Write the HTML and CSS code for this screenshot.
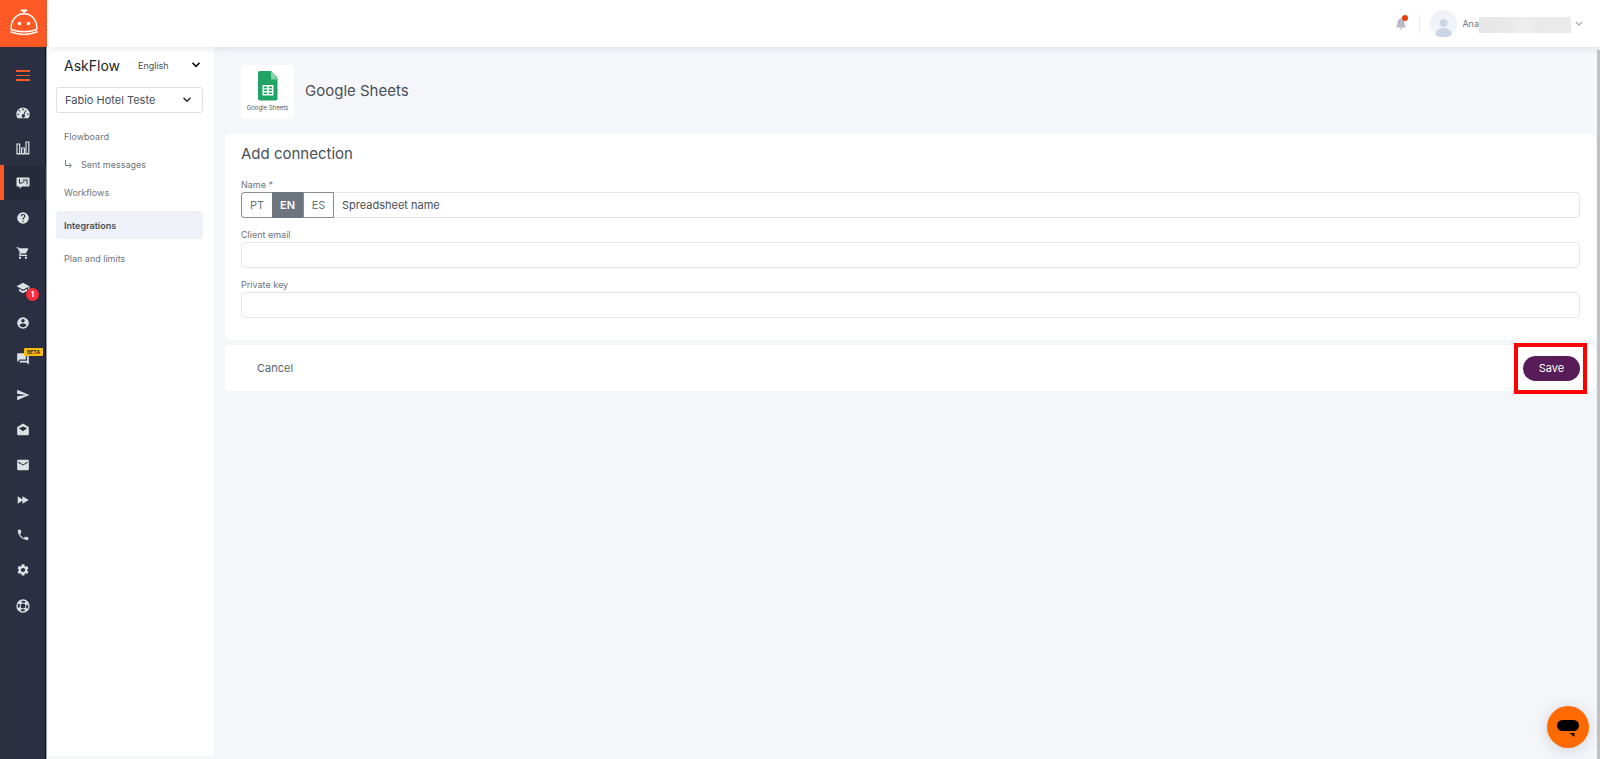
FILE: index.html
```html
<!DOCTYPE html>
<html lang="en">
<head>
    <meta charset="UTF-8">
    <meta name="viewport" content="width=device-width, initial-scale=1.0">
    <title>AskFlow - Google Sheets</title>
    <link rel="stylesheet" href="styles.css">
</head>
<body>
    <nav class="rail" aria-label="Main">
        <a class="brand" href="#" aria-label="Home">
            <svg width="30" height="27" viewBox="0 0 30 27" fill="none" stroke="#fff" stroke-width="1.4" stroke-linecap="round">
                <path d="M12.500 1.500h5M15 1.500v3" stroke-width="1.800"/>
                <path d="M2.200 20.500C1.600 11.500 7 4.700 15 4.700s13.400 6.800 12.800 15.800C20 23.200 10 23.200 2.200 20.500z"/>
                <path d="M2 23c8 3 18 3 26 0"/>
                <circle cx="10.500" cy="14.500" r="1.700" fill="#fff" stroke="none"/>
                <circle cx="19.500" cy="14.500" r="1.700" fill="#fff" stroke="none"/>
            </svg>
        </a>
        <button class="rail-toggle" type="button" aria-label="Toggle menu">
            <svg width="14" height="12" viewBox="0 0 14 12" fill="#ff5a25"><path d="M0 0h14v2H0zM0 5h14v1H0zM0 9h14v2H0z"/></svg>
        </button>
        <a class="rail-item" href="#" aria-label="Dashboard">
            <svg width="14" height="12" viewBox="0 0 14 12"><path fill-rule="evenodd" d="M7 .5A6.700 6.700 0 0 0 .3 7.200c0 1.500.4 2.800 1.200 4h11c.8-1.200 1.200-2.500 1.200-4A6.700 6.700 0 0 0 7 .5zM7 1.600a.8.8 0 1 1 0 1.600.8.8 0 0 1 0-1.600zM3.500 3a.8.8 0 1 1 0 1.600.8.8 0 0 1 0-1.600zM2.200 6.500a.8.8 0 1 1 0 1.600.8.8 0 0 1 0-1.600zM11.800 6.500a.8.8 0 1 1 0 1.600.8.8 0 0 1 0-1.600zM9.600 3l.8.400-2 4.200a1.600 1.600 0 1 1-1-.3z"/></svg>
        </a>
        <a class="rail-item" href="#" aria-label="Reports">
            <svg width="14" height="14" viewBox="0 0 14 14" fill="none" stroke="#dce1e4" stroke-width="1.200"><path d="M1 3h2.700v9.500H1zM5.600 7h2.800v5.500H5.600zM10 1h2.800v11.500H10zM.4 13h13"/></svg>
        </a>
        <a class="rail-item active" href="#" aria-label="AskFlow">
            <svg width="14" height="12" viewBox="0 0 14 12"><path fill-rule="evenodd" d="M1.500.5h11c.6 0 1 .4 1 1v7c0 .6-.4 1-1 1H6L3.500 11.800V9.500h-2c-.6 0-1-.4-1-1v-7c0-.6.4-1 1-1zM3 2v4.500h3.500V5.500H4V2zM6.800 2.500v1h3.700V7.500h1v-5z"/><path d="M6.500 4.500h2v1h-2z" fill="#262a3a"/></svg>
        </a>
        <a class="rail-item" href="#" aria-label="Help">
            <svg width="14" height="14" viewBox="0 0 24 24"><path d="M12 2a10 10 0 1 0 0 20 10 10 0 0 0 0-20zm1 17h-2v-2h2v2zm2.070-7.750-.9.920C13.450 12.900 13 13.500 13 15h-2v-.5c0-1.100.45-2.100 1.170-2.830l1.240-1.260c.37-.36.590-.86.590-1.410a2 2 0 1 0-4 0H8a4 4 0 1 1 8 0c0 .88-.36 1.680-.93 2.250z"/></svg>
        </a>
        <a class="rail-item" href="#" aria-label="Shop">
            <svg width="14" height="14" viewBox="0 0 24 24"><path d="M7 18a2 2 0 1 0 0 4 2 2 0 0 0 0-4zM1 2v2h2l3.600 7.590-1.350 2.450C4.520 15.370 5.480 17 7 17h12v-2H7.420a.25.25 0 0 1-.25-.25l.03-.12.900-1.630h7.450c.75 0 1.410-.41 1.750-1.030l3.580-6.490A1 1 0 0 0 20 4H5.210l-.94-2H1zm16 16a2 2 0 1 0 0 4 2 2 0 0 0 0-4z"/></svg>
        </a>
        <a class="rail-item" href="#" aria-label="Academy">
            <svg width="14" height="14" viewBox="0 0 24 24"><path d="M5 13.180v4L12 21l7-3.820v-4L12 17l-7-3.820zM12 3 1 9l11 6 9-4.910V17h2V9L12 3z"/></svg>
            <span class="count-badge">1</span>
        </a>
        <a class="rail-item" href="#" aria-label="Profile">
            <svg width="14" height="14" viewBox="0 0 24 24"><path d="M12 2a10 10 0 1 0 0 20 10 10 0 0 0 0-20zm0 3a3 3 0 1 1 0 6 3 3 0 0 1 0-6zm0 14.200a7.200 7.200 0 0 1-6-3.220c.03-1.990 4-3.080 6-3.080s5.970 1.090 6 3.080a7.200 7.200 0 0 1-6 3.220z"/></svg>
        </a>
        <a class="rail-item tall" href="#" aria-label="Chat">
            <svg width="14" height="14" viewBox="0 0 24 24"><path d="M21 6h-2v9H6v2c0 .55.450 1 1 1h11l4 4V7c0-.55-.45-1-1-1zm-4 6V3c0-.55-.45-1-1-1H3c-.55 0-1 .450-1 1v14l4-4h10c.55 0 1-.45 1-1z"/></svg>
            <span class="beta-badge">BETA</span>
        </a>
        <a class="rail-item" href="#" aria-label="Campaigns">
            <svg width="14" height="14" viewBox="0 0 24 24"><path d="M2 21 23 12 2 3v7l15 2-15 2z"/></svg>
        </a>
        <a class="rail-item" href="#" aria-label="Newsletters">
            <svg width="14" height="14" viewBox="0 0 24 24"><path fill-rule="evenodd" d="M12 1 3 6.300C2.400 6.700 2 7.300 2 8v11c0 1.100.9 2 2 2h16a2 2 0 0 0 2-2V8c0-.7-.4-1.300-1-1.700zM12 6l7 3.200L12 14 5 9.200z"/></svg>
        </a>
        <a class="rail-item" href="#" aria-label="Email">
            <svg width="14" height="14" viewBox="0 0 24 24"><path d="M20 3H4a2 2 0 0 0-2 2v14c0 1.100.9 2 2 2h16a2 2 0 0 0 2-2V5a2 2 0 0 0-2-2zm0 5-8 5-8-5V6l8 5 8-5v2z"/></svg>
        </a>
        <a class="rail-item" href="#" aria-label="Automations">
            <svg width="14" height="14" viewBox="0 0 24 24"><path d="M3 18.500 11 13v5.500L22 12 11 5.500V11L3 5.500z"/></svg>
        </a>
        <a class="rail-item" href="#" aria-label="Calls">
            <svg width="14" height="14" viewBox="0 0 24 24"><path d="M6.620 10.790a15.150 15.150 0 0 0 6.590 6.590l2.200-2.200a1 1 0 0 1 1.020-.24c1.120.37 2.330.570 3.570.570.55 0 1 .450 1 1V20c0 .55-.45 1-1 1A17 17 0 0 1 3 4c0-.55.450-1 1-1h3.500c.55 0 1 .450 1 1 0 1.250.2 2.450.57 3.570a1 1 0 0 1-.25 1.020z"/></svg>
        </a>
        <a class="rail-item" href="#" aria-label="Settings">
            <svg width="14" height="14" viewBox="0 0 24 24"><path d="M19.140 12.940c.04-.3.060-.61.060-.94s-.02-.64-.07-.94l2.030-1.580a.49.49 0 0 0 .12-.61l-1.920-3.320a.49.49 0 0 0-.59-.22l-2.390.960a7 7 0 0 0-1.620-.94l-.36-2.540A.48.480 0 0 0 13.920 2h-3.840a.48.480 0 0 0-.47.410l-.36 2.540c-.59.240-1.130.57-1.620.940l-2.390-.96a.48.480 0 0 0-.59.220L2.740 8.870a.48.480 0 0 0 .12.610l2.030 1.580a6 6 0 0 0 0 1.880l-2.030 1.580a.49.490 0 0 0-.12.610l1.920 3.320c.12.220.370.29.590.22l2.390-.96c.5.380 1.030.700 1.620.940l.36 2.540c.05.240.24.410.48.410h3.840c.24 0 .44-.17.470-.41l.36-2.540a7 7 0 0 0 1.620-.94l2.390.960c.22.080.47 0 .59-.22l1.920-3.320a.48.480 0 0 0-.12-.61zM12 15.600a3.600 3.600 0 1 1 0-7.200 3.600 3.600 0 0 1 0 7.200z"/></svg>
        </a>
        <a class="rail-item tall" href="#" aria-label="Support">
            <svg width="14" height="14" viewBox="0 0 14 14" fill="none" stroke="#dce1e4"><circle cx="7" cy="7" r="6" stroke-width="1.300"/><circle cx="7" cy="7" r="4.400" stroke-width="3" stroke-dasharray="3.450 3.450" stroke-dashoffset="1.700" transform="rotate(45 7 7)"/><circle cx="7" cy="7" r="3" stroke-width="1"/></svg>
        </a>
    </nav>

    <div class="page">
        <header class="topbar">
            <button class="bell" type="button" aria-label="Notifications">
                <svg width="10" height="12" viewBox="0 0 10 12" fill="#b8b8c8"><path d="M5 0c.5 0 .8.300.8.800C7.600 1.200 8.500 2.600 8.500 4.500c0 2.500.5 3.500 1.300 4.200V9.500H.2v-.8C1 8 1.500 7 1.500 4.500c0-1.900.9-3.300 2.700-3.700C4.200.3 4.500 0 5 0zM3.600 10.200h2.800a1.400 1.400 0 0 1-2.800 0z"/></svg>
                <span class="bell-dot"></span>
            </button>
            <span class="divider"></span>
            <button class="user" type="button">
                <svg class="avatar" width="27" height="27" viewBox="0 0 27 27"><circle cx="13.500" cy="13.500" r="13.500" fill="#f0f4f8"/><circle cx="13.500" cy="13" r="4" fill="#cbd5e3"/><path d="M5.500 25c0-4.500 3.500-7 8-7s8 2.500 8 7a13.500 13.500 0 0 1-16 0z" fill="#cbd5e3"/></svg>
                <span>Ana</span>
                <span class="user-mask"></span>
                <svg width="8" height="6" viewBox="0 0 8 6" fill="none" stroke="#a9adbb" stroke-width="1.300"><path d="M1 1l3 3 3-3"/></svg>
            </button>
        </header>

        <div class="content">
            <aside class="side">
                <div class="side-head">
                    <span class="side-title">AskFlow</span>
                    <div class="select-box language">
                        <select aria-label="Language"><option>English</option></select>
                        <svg width="8" height="6" viewBox="0 0 8 6" fill="none" stroke="#111" stroke-width="1.600"><path d="M.5.8 4 4.300 7.500.8"/></svg>
                    </div>
                </div>
                <div class="select-box hotel">
                    <select aria-label="Hotel"><option>Fabio Hotel Teste</option></select>
                    <svg width="8" height="6" viewBox="0 0 8 6" fill="none" stroke="#222" stroke-width="1.400"><path d="M.5.8 4 4.300 7.500.8"/></svg>
                </div>
                <nav class="side-nav" aria-label="AskFlow">
                    <a href="#">Flowboard</a>
                    <a href="#">
                        <svg width="9" height="9" viewBox="0 0 9 9" fill="none" stroke="#74808c"><path d="M1.500 0v5.500h5.500M5.200 3.300l2.200 2.200-2.200 2.200"/></svg>
                        Sent messages
                    </a>
                    <a href="#">Workflows</a>
                    <a class="selected" href="#">Integrations</a>
                    <a href="#">Plan and limits</a>
                </nav>
            </aside>

            <main class="main">
                <div class="app-head">
                    <div class="app-logo">
                        <svg width="20" height="30" viewBox="0 0 20 30"><path d="M2 0h11l6.500 7v20.500a2 2 0 0 1-2 2H2a2 2 0 0 1-2-2V2a2 2 0 0 1 2-2z" fill="#1fa463"/><path d="M13 0l6.500 8.500H14.500A1.500 1.500 0 0 1 13 7z" fill="#8ed1b1"/><path fill-rule="evenodd" d="M4.500 14h11v10.500h-11zM6 15.500v1.700h3.200v-1.700zm4.700 0v1.700H14v-1.700zM6 18.500v1.600h3.200v-1.600zm4.700 0v1.600H14v-1.600zM6 21.400v1.700h3.200v-1.700zm4.700 0v1.700H14v-1.700z" fill="#fff"/></svg>
                        <span>Google Sheets</span>
                    </div>
                    <h1>Google Sheets</h1>
                </div>

                <form class="connection">
                    <section class="card fields">
                        <h2>Add connection</h2>
                        <div class="form-group">
                            <label for="name">Name *</label>
                            <div class="input-group">
                                <button class="lang-btn" type="button">PT</button>
                                <button class="lang-btn selected" type="button">EN</button>
                                <button class="lang-btn" type="button">ES</button>
                                <input type="text" id="name" value="Spreadsheet name">
                            </div>
                        </div>
                        <div class="form-group">
                            <label for="email">Client email</label>
                            <input type="text" id="email">
                        </div>
                        <div class="form-group">
                            <label for="key">Private key</label>
                            <input type="text" id="key">
                        </div>
                    </section>
                    <div class="card actions">
                        <button class="cancel-btn" type="button">Cancel</button>
                        <div class="save-box">
                            <button class="save-btn" type="button">Save</button>
                        </div>
                    </div>
                </form>
            </main>
            <div class="scrollbar"></div>
        </div>
    </div>

    <button class="chat-launcher" type="button" aria-label="Open chat">
        <svg width="22" height="18" viewBox="0 0 22 18"><rect x="0" y="0" width="22" height="11" rx="5.500"/><path d="M12.500 13h5v4z"/></svg>
    </button>
</body>
</html>
```
FILE: styles.css
```css
* {
    box-sizing: border-box;
}
body {
    display: flex;
    min-height: 100vh;
    margin: 0;
    font-family: Inter, "Liberation Sans", sans-serif;
    font-size: 11px;
    color: #495057;
    background-color: #f4f6fa;
}
a {
    color: inherit;
    text-decoration: none;
}
button, input, select {
    font: inherit;
    color: inherit;
}
button {
    padding: 0;
    border: none;
    background: none;
    cursor: pointer;
}
svg {
    display: block;
    flex: none;
}

/* icon rail */
.rail {
    flex: none;
    width: 47px;
    background-color: #2b2f42;
    border-right: 1px solid #9a9ca8;
    box-shadow: inset -1px 0 #101428;
}
.brand {
    display: flex;
    align-items: center;
    justify-content: center;
    height: 47px;
    margin-right: -1px;
    padding-bottom: 3px;
    background-color: #ff5a25;
}
.rail-toggle {
    display: flex;
    align-items: center;
    justify-content: center;
    width: 100%;
    height: 38px;
    margin: 10px 0 0;
    padding-bottom: 1px;
}
.rail-item {
    position: relative;
    display: flex;
    align-items: center;
    justify-content: center;
    height: 35px;
    fill: #dce1e4;
}
.rail-item.tall {
    height: 37px;
}
.rail-item.active {
    background-color: #262a3a;
    box-shadow: inset 4px 0 #ff5a25;
}
.count-badge {
    position: absolute;
    top: 18px;
    left: 26px;
    width: 13px;
    height: 13px;
    border-radius: 50%;
    background-color: #f92d36;
    color: #fff;
    font-size: 8px;
    font-weight: 700;
    line-height: 13px;
    text-align: center;
}
.beta-badge {
    position: absolute;
    top: 8px;
    left: 24px;
    width: 19px;
    border-radius: 1px;
    background-color: #f8b90c;
    color: #2b2f42;
    font-size: 5px;
    font-weight: 700;
    line-height: 8px;
    text-align: center;
}

/* top bar */
.page {
    display: flex;
    flex: 1;
    flex-direction: column;
    min-width: 0;
}
.topbar {
    position: relative;
    display: flex;
    align-items: center;
    justify-content: flex-end;
    height: 47px;
    padding-right: 17px;
    background-color: #fff;
    box-shadow: 0 1px 8px rgba(40, 45, 70, 0.13);
}
.bell {
    position: relative;
}
.bell-dot {
    position: absolute;
    top: -3px;
    right: -2px;
    width: 6px;
    height: 6px;
    border-radius: 50%;
    background-color: #e63c0c;
}
.divider {
    width: 1px;
    height: 18px;
    margin: 0 10px 0 13px;
    background-color: #e6e8ee;
}
.user {
    display: flex;
    align-items: center;
    font-size: 9px;
    color: #6c757d;
}
.avatar {
    margin-right: 5px;
}
.user-mask {
    width: 92px;
    height: 16px;
    margin: 2px 4px 0 0;
    background: linear-gradient(90deg, #e6e6e6, #e9e9e9 30%, #efefef 50%, #e9e9e9 65%, #ebebeb);
}

/* side panel */
.content {
    display: flex;
    flex: 1;
}
.side {
    flex: none;
    width: 167px;
    margin-bottom: 3px;
    padding: 8px 11px 0 9px;
    background-color: #fff;
}
.side-head {
    display: flex;
    align-items: center;
    justify-content: space-between;
    height: 20px;
    margin-bottom: 12px;
    padding: 0 3px 0 8px;
}
.side-title {
    font-size: 14px;
    color: #212529;
}
.select-box {
    position: relative;
}
.select-box select {
    appearance: none;
    width: 100%;
    border: none;
    background: none;
}
.select-box svg {
    position: absolute;
    top: 50%;
    margin-top: -3px;
    pointer-events: none;
}
.language {
    width: 62px;
    font-size: 9px;
}
.language select {
    padding: 0;
}
.language svg {
    right: 0;
}
.hotel select {
    height: 26px;
    padding: 0 8px;
    border: 1px solid #dce1e6;
    border-radius: 3px;
}
.hotel svg {
    right: 12px;
}
.side-nav {
    display: flex;
    flex-direction: column;
    margin-top: 9px;
    font-size: 9px;
    color: #6c757d;
}
.side-nav a {
    display: flex;
    align-items: center;
    gap: 8px;
    height: 28px;
    padding: 0 8px;
}
.side-nav .selected {
    margin: 5px 0;
    border-radius: 3px;
    background-color: #eef1f7;
    color: #495057;
    font-weight: 600;
}

/* main column */
.main {
    flex: 1;
    min-width: 0;
    padding: 6px 1px 0 11px;
}
.app-head {
    display: flex;
    align-items: center;
    gap: 11px;
    height: 76px;
    margin-bottom: 5px;
    padding: 0 16px;
    border-radius: 5px;
    background-color: #f6f7fb;
}
.app-logo {
    display: flex;
    flex-direction: column;
    align-items: center;
    justify-content: center;
    gap: 3px;
    width: 53px;
    height: 53px;
    border-radius: 4px;
    background-color: #fff;
    font-size: 6px;
    color: #555;
}
h1, h2 {
    margin: 0;
    font-size: 15px;
    font-weight: 400;
    line-height: 20px;
}
.card {
    border-radius: 5px;
    background-color: #fff;
}
.fields {
    margin-bottom: 5px;
    padding: 10px 16px 12px;
}
.fields h2 {
    margin-bottom: 14px;
}
.form-group {
    margin-bottom: 10px;
}
.form-group label {
    display: block;
    font-size: 9px;
    line-height: 14px;
    color: #6c757d;
}
.form-group input {
    display: block;
    width: 100%;
    height: 26px;
    padding: 0 8px;
    border: 1px solid #e3e6ea;
    border-radius: 4px;
    background-color: #fff;
}
.input-group {
    display: flex;
}
.form-group .input-group input {
    flex: 1;
    border-left: none;
    border-radius: 0 4px 4px 0;
}
.lang-btn {
    width: 31px;
    border: 1px solid #868e96;
    color: #6c757d;
}
.lang-btn:first-child {
    border-right: none;
    border-radius: 4px 0 0 4px;
}
.lang-btn.selected {
    border-color: #6c757d;
    background-color: #6c757d;
    color: #fff;
    font-weight: 600;
}
.actions {
    display: flex;
    align-items: center;
    justify-content: space-between;
    height: 46px;
    padding: 0 16px 0 32px;
}
.cancel-btn {
    color: #5c636a;
}
.save-box {
    position: relative;
}
.save-box::after {
    content: "";
    position: absolute;
    inset: -13px -7px -13px -9px;
    border: 4px solid #f00;
    pointer-events: none;
}
.save-btn {
    width: 57px;
    height: 25px;
    border-radius: 13px;
    background-color: #581c58;
    color: #fff;
}
.scrollbar {
    flex: none;
    width: 3px;
    margin-top: 3px;
    background-color: #c1c1c1;
}

.chat-launcher {
    position: fixed;
    right: 11px;
    bottom: 11px;
    display: flex;
    align-items: center;
    justify-content: center;
    width: 42px;
    height: 42px;
    padding-top: 4px;
    border-radius: 50%;
    background-color: #ff6a00;
    box-shadow: 0 2px 16px rgba(0, 40, 50, 0.16);
}
```
